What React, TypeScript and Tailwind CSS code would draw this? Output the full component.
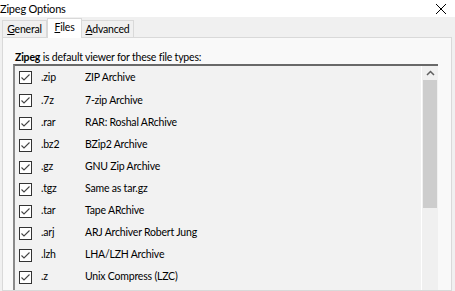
import React from "react";

const rows: [string, string, string][] = [
  [".zip", "ZIP Archive", "h-[23px]"],
  [".7z", "7-zip Archive", "h-[23px]"],
  [".rar", "RAR: Roshal ARchive", "h-[22px]"],
  [".bz2", "BZip2 Archive", "h-[22px]"],
  [".gz", "GNU Zip Archive", "h-[22px]"],
  [".tgz", "Same as tar.gz", "h-[22px]"],
  [".tar", "Tape ARchive", "h-[22px]"],
  [".arj", "ARJ Archiver Robert Jung", "h-[22px]"],
  [".lzh", "LHA/LZH Archive", "h-[22px]"],
  [".z", "Unix Compress (LZC)", "h-[22px]"],
];

function Check() {
  return (
    <div className="w-[13px] h-[13px] border border-[#333333] bg-white flex items-center justify-center">
      <svg width="11" height="11" viewBox="0 0 11 11">
        <path d="M1.5 5.5 L4 8 L9.5 2.5" fill="none" stroke="#444444" strokeWidth="1.1" />
      </svg>
    </div>
  );
}

export default function App() {
  return (
    <div
      className="w-[455px] h-[291px] overflow-hidden bg-[#f0f0f0] text-[10.5px] tracking-[-0.2px] text-black flex flex-col"
      style={{ fontFamily: 'Lato, "Liberation Sans", sans-serif' }}
    >
      <div className="h-[17px] bg-white flex items-center justify-between shrink-0">
        <span className="leading-none text-[11px]">Zipeg Options</span>
        <svg width="12" height="12" viewBox="0 0 12 12" className="mr-[8px]">
          <path d="M1 1 L11 11 M11 1 L1 11" stroke="#000" strokeWidth="1" />
        </svg>
      </div>
      <div className="h-[20px] flex items-end pl-[2px] shrink-0 relative">
        <div className="h-[17px] w-[45px] border border-b-0 border-[#d9d9d9] flex items-center justify-center pt-[1px]">
          <span><u>G</u>eneral</span>
        </div>
        <div className="h-[20px] w-[35px] border border-b-0 border-[#d9d9d9] bg-white flex items-center justify-center relative z-10 -mb-[1px] pb-[1px]">
          <span><u>F</u>iles</span>
        </div>
        <div className="h-[17px] w-[52px] border border-b-0 border-l-0 border-[#d9d9d9] flex items-center justify-center pt-[1px]">
          <span><u>A</u>dvanced</span>
        </div>
      </div>
      <div className="flex-1 ml-[2px] mr-[3px] border border-[#d9d9d9] bg-[#f9f9f9] pl-[10px] pr-[13px] pt-[13px] flex flex-col">
        <div className="leading-[13px] pl-[2px]">
          <b>Zipeg</b> is default viewer for these file types:
        </div>
        <div className="flex-1 border-t-2 border-l-2 border-t-[#696969] border-l-[#8a8a8a] bg-[#f2f2f2] flex">
          <div className="flex-1 flex flex-col">
            {rows.map(([ext, desc, h]) => (
              <div key={ext} className={`${h} flex items-center shrink-0`}>
                <div className="ml-[4px]">
                  <Check />
                </div>
                <span className="ml-[9px] w-[44px]">{ext}</span>
                <span>{desc}</span>
              </div>
            ))}
          </div>
          <div className="w-[17px] bg-[#f0f0f0] flex flex-col border-l border-white">
            <div className="h-[14px] flex items-center justify-center">
              <svg width="9" height="6" viewBox="0 0 9 6">
                <path d="M1 5 L4.5 1.5 L8 5" fill="none" stroke="#606060" strokeWidth="1.5" />
              </svg>
            </div>
            <div className="h-[128px] mx-[1px] bg-[#cdcdcd]" />
          </div>
        </div>
      </div>
    </div>
  );
}
